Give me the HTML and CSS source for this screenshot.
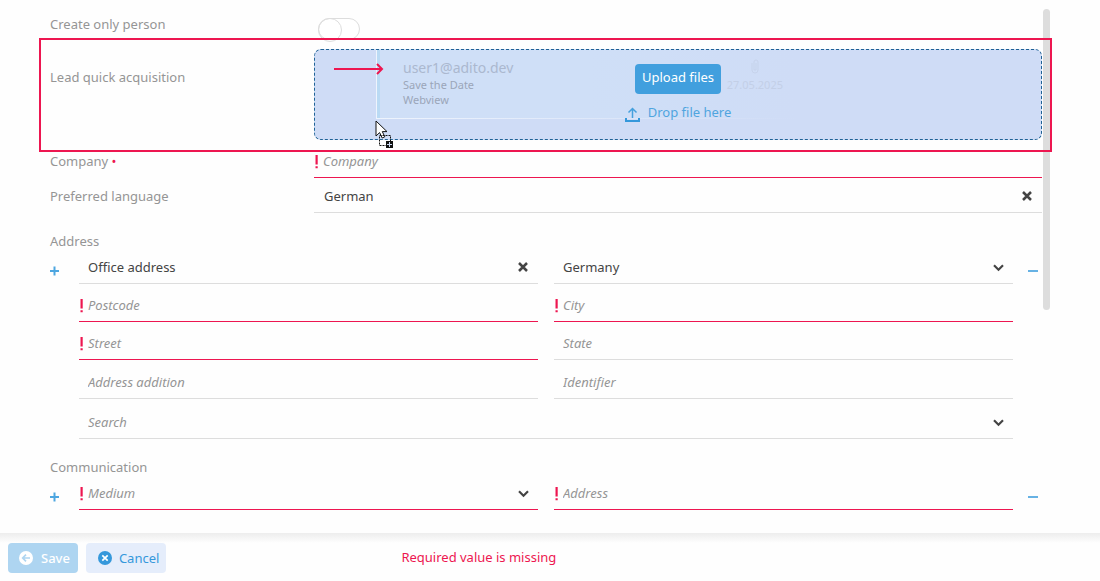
FILE: index.html
```html
<!DOCTYPE html>
<html lang="en">
<head>
<meta charset="utf-8">
<title>Lead</title>
<link rel="stylesheet" href="styles.css">
</head>
<body>
<svg class="defs" aria-hidden="true">
  <symbol id="bang" viewBox="0 0 3 14"><path d="M0.5 0h2.2v9.6H0.5zM0.5 11.3h2.2v2H0.5z" fill="#ed1650"/></symbol>
  <symbol id="chevron" viewBox="0 0 11 8"><path d="M1 1.3l4.5 4.4L10 1.3" fill="none" stroke="#444" stroke-width="2.2"/></symbol>
  <symbol id="cross" viewBox="0 0 10 10"><path d="M1 1l8 8M9 1L1 9" stroke="#444" stroke-width="2.5"/></symbol>
  <symbol id="plus" viewBox="0 0 10 10"><path d="M0 5h9M4.5 0.5v9" stroke="#4da6e0" stroke-width="2"/></symbol>
  <symbol id="minus" viewBox="0 0 10 10"><path d="M0 5h10" stroke="#67b2e4" stroke-width="2"/></symbol>
</svg>
<form class="app">
  <main class="content">
    <div class="row row-switch">
      <label for="person">Create only person</label>
      <input class="switch" type="checkbox" role="switch" id="person">
    </div>
    <div class="row row-drop">
      <label for="upload">Lead quick acquisition</label>
      <div class="dropzone">
        <div class="ghost">
          <div class="ghost-text">
            <p class="ghost-from">user1@adito.dev</p>
            <p>Save the Date</p>
            <p>Webview</p>
          </div>
          <div class="ghost-meta">
            <svg width="8" height="15" viewBox="0 0 8 15"><path d="M1 4v7a3 3 0 0 0 6 0V3a2 2 0 0 0-4 0v8h2V4" fill="none" stroke="#b3bdd4"/></svg>
            <span>27.05.2025</span>
          </div>
        </div>
        <button class="btn upload" type="button" id="upload">Upload files</button>
        <div class="drop-hint">
          <svg width="15" height="15" viewBox="0 0 15 15"><path d="M7.5 11V1.5M3.5 5.5l4-4 4 4" fill="none" stroke="#45a0dd" stroke-width="1.5"/><path d="M1 11v3h13v-3" fill="none" stroke="#3598db" stroke-width="2"/></svg>
          <span>Drop file here</span>
        </div>
        <svg class="arrow" width="50" height="12" viewBox="0 0 50 12"><path d="M0 6h48M43 1l5 5-5 5" fill="none" stroke="#ed1650" stroke-width="2"/></svg>
        <svg class="cursor" width="20" height="30" viewBox="0 0 20 30">
          <path d="M1 1v15l3.6-3.4 2.6 5.4 2.6-1.2-2.5-5.2H12z" fill="#fff" stroke="#111"/>
          <rect x="4.500" y="15.500" width="11" height="10" fill="none" stroke="#111" stroke-dasharray="2 1"/>
          <rect x="11" y="21" width="7" height="7" fill="#111"/>
          <path d="M12 24.500h5M14.500 22v5" stroke="#cfdcf6"/>
        </svg>
      </div>
      <div class="highlight"></div>
    </div>
    <div class="row row-company">
      <label for="company">Company <span class="required">•</span></label>
      <div class="field error"><svg class="bang"><use href="#bang"/></svg><input id="company" type="text" placeholder="Company"></div>
    </div>
    <div class="row row-language">
      <label for="language">Preferred language</label>
      <div class="field"><span class="slot"></span><input id="language" type="text" value="German"><button class="icon-btn" type="button" aria-label="Clear language"><svg width="10" height="10"><use href="#cross"/></svg></button></div>
    </div>

    <section>
      <h2>Address</h2>
      <div class="group">
        <button class="side" type="button" aria-label="Add address"><svg width="10" height="10"><use href="#plus"/></svg></button>
        <div class="fields">
          <div class="field short"><span class="slot"></span><input type="text" value="Office address" aria-label="Address type"><button class="icon-btn" type="button" aria-label="Clear address type"><svg width="10" height="10"><use href="#cross"/></svg></button></div>
          <div class="field short"><span class="slot"></span><select aria-label="Country"><option>Germany</option></select><svg class="chevron"><use href="#chevron"/></svg></div>
          <div class="field error"><svg class="bang"><use href="#bang"/></svg><input type="text" placeholder="Postcode" aria-label="Postcode"></div>
          <div class="field error"><svg class="bang"><use href="#bang"/></svg><input type="text" placeholder="City" aria-label="City"></div>
          <div class="field error"><svg class="bang"><use href="#bang"/></svg><input type="text" placeholder="Street" aria-label="Street"></div>
          <div class="field"><span class="slot"></span><input type="text" placeholder="State" aria-label="State"></div>
          <div class="field tall"><span class="slot"></span><input type="text" placeholder="Address addition" aria-label="Address addition"></div>
          <div class="field tall"><span class="slot"></span><input type="text" placeholder="Identifier" aria-label="Identifier"></div>
          <div class="field wide"><span class="slot"></span><select class="empty" aria-label="Search"><option>Search</option></select><svg class="chevron"><use href="#chevron"/></svg></div>
        </div>
        <button class="side remove" type="button" aria-label="Remove address"><svg width="10" height="10"><use href="#minus"/></svg></button>
      </div>
    </section>

    <section>
      <h2>Communication</h2>
      <div class="group">
        <button class="side" type="button" aria-label="Add communication"><svg width="10" height="10"><use href="#plus"/></svg></button>
        <div class="fields">
          <div class="field short error"><svg class="bang"><use href="#bang"/></svg><select class="empty" aria-label="Medium"><option>Medium</option></select><svg class="chevron"><use href="#chevron"/></svg></div>
          <div class="field short error"><svg class="bang"><use href="#bang"/></svg><input type="text" placeholder="Address" aria-label="Communication address"></div>
        </div>
        <button class="side remove" type="button" aria-label="Remove communication"><svg width="10" height="10"><use href="#minus"/></svg></button>
      </div>
    </section>
    <div class="scrollbar"></div>
  </main>
  <footer class="footer">
    <button class="btn save" type="submit" disabled><svg width="14" height="14" viewBox="0 0 14 14"><circle cx="7" cy="7" r="7" fill="#fff"/><path d="M11 7H4M7 3.700L3.700 7 7 10.300" fill="none" stroke="#aed5f1" stroke-width="1.700"/></svg>Save</button>
    <button class="btn cancel" type="button"><svg width="14" height="14" viewBox="0 0 14 14"><circle cx="7" cy="7" r="7" fill="#3598db"/><path d="M4.300 4.300l5.400 5.400M9.700 4.300L4.300 9.700" stroke="#fff" stroke-width="1.700"/></svg>Cancel</button>
    <p class="message" role="alert">Required value is missing</p>
  </footer>
</form>
</body>
</html>
```
FILE: styles.css
```css
* { box-sizing: border-box; }

body {
  margin: 0;
  background: #fefefe;
  color: #444;
  font: 13px/18px "Noto Sans", sans-serif;
}

p, h2 { margin: 0; }

svg { display: block; flex: none; }

.defs { position: absolute; width: 0; height: 0; }

button, input, select { font: inherit; color: inherit; }

button { border: 0; padding: 0; background: none; }

.app {
  display: flex;
  flex-direction: column;
  min-height: 100vh;
}

.content {
  position: relative;
  flex: 1;
  padding: 0 58px 0 50px;
}

.row {
  display: grid;
  grid-template-columns: 264px minmax(0, 1fr);
}

.row label, h2 { color: #959595; }

.row-switch { padding-top: 15px; height: 38px; }

.switch {
  appearance: none;
  width: 42px;
  height: 22px;
  margin: 3px 0 0 4px;
  border: 1px solid #ddd;
  border-radius: 11px;
  background: #fff;
}

.switch::before {
  content: "";
  display: block;
  width: 22px;
  height: 22px;
  margin: -1px;
  border: 1px solid #ddd;
  border-radius: 50%;
}

.row-drop {
  position: relative;
  padding: 11px 0 12px;
}

.row-drop label { padding-top: 19px; }

.highlight {
  position: absolute;
  inset: 0 -10px 0 -11px;
  border: 2px solid #ed1650;
  pointer-events: none;
}

.dropzone {
  position: relative;
  display: flex;
  flex-direction: column;
  align-items: center;
  gap: 9px;
  height: 91px;
  padding-top: 14px;
  border: 1px dashed #1f6296;
  border-radius: 7px;
  background: #cfdcf6;
}

.btn {
  display: flex;
  align-items: center;
  height: 30px;
  border-radius: 4px;
}

.upload {
  position: relative;
  padding: 0 7px 4px;
  background: #419fde;
  color: #fff;
}

.drop-hint {
  position: relative;
  display: flex;
  gap: 8px;
  color: #50a5df;
}

.drop-hint svg { margin-top: 4px; }

.ghost {
  position: absolute;
  top: 0;
  left: 61px;
  display: flex;
  justify-content: space-between;
  width: 420px;
  height: 69px;
  padding: 9px 13px 0 26px;
  border: solid #fff;
  border-width: 0 0 1px 1px;
  border-image: linear-gradient(to right, #eef4fd, #cfdcf6) 1;
  background: linear-gradient(to right, #badaf4 3px, #cfdff7 3px, #cfdff7 50%, #cfdcf6);
  color: #9ba6b9;
  font-size: 11px;
  line-height: 15px;
}

.ghost-from { font-size: 14px; line-height: 18px; color: #abb8cf; }

.ghost-meta {
  display: flex;
  flex-direction: column;
  align-items: center;
  gap: 3px;
  color: #c3cfe7;
}

.ghost-meta svg { opacity: 0.300; }

.arrow { position: absolute; left: 19px; top: 13px; }

.cursor { position: absolute; left: 60px; top: 70px; }

.row-company { height: 26px; }

.row-language { height: 35px; }

.row-language label { padding-top: 9px; }

.required { color: #ed1650; }

.field {
  display: flex;
  align-items: center;
  align-self: end;
  height: 26px;
  padding-bottom: 7px;
  border-bottom: 1px solid #ddd;
}

.error { border-color: #ed1650; }

.field input, .field select {
  appearance: none;
  flex: 1;
  min-width: 0;
  width: 100%;
  height: 18px;
  padding: 0;
  border: 0;
  outline: 0;
  background: none;
}

.field input::placeholder { color: #959595; opacity: 1; }

.field input:placeholder-shown, .field .empty { font-style: italic; color: #959595; }

.bang { width: 3px; height: 14px; margin: 2px 5px 0 1px; }

.slot { flex: none; width: 9px; }

.row-language .slot { width: 10px; }

.chevron { width: 11px; height: 8px; margin: 1px 9px 0 0; pointer-events: none; }

.icon-btn { flex: none; margin-right: 10px; }

h2 {
  font-size: 13px;
  line-height: 18px;
  font-weight: 400;
}

section { padding-top: 19px; }

.group {
  display: grid;
  grid-template-columns: 29px minmax(0, 1fr) 29px;
  align-items: start;
}

.fields {
  display: grid;
  grid-template-columns: 1fr 1fr;
  column-gap: 16px;
}

.fields .field { margin-top: 12px; }

.fields .short { margin-top: 8px; }

.fields .tall { margin-top: 13px; }

.fields .wide { grid-column: 1 / -1; margin-top: 14px; }

.side { padding-top: 16px; }

.remove { padding-left: 15px; }

.scrollbar {
  position: absolute;
  top: 9px;
  right: 50px;
  width: 7px;
  height: 301px;
  border-radius: 4px;
  background: #ddd;
  z-index: -1;
}

.footer {
  display: flex;
  align-items: center;
  height: 48px;
  padding: 2px 8px 0;
  background: linear-gradient(#ededed, #fefefe 10px);
}

.save {
  gap: 8px;
  margin-right: 8px;
  padding: 0 8px 1px 11px;
  background: #aed5f1;
  color: #fff;
  font-weight: 500;
}

.cancel {
  gap: 7px;
  padding: 0 7px 1px 12px;
  background: #e5edfb;
  color: #3598db;
}

.message { margin-left: 235px; padding-bottom: 2px; color: #ed1650; }
```
